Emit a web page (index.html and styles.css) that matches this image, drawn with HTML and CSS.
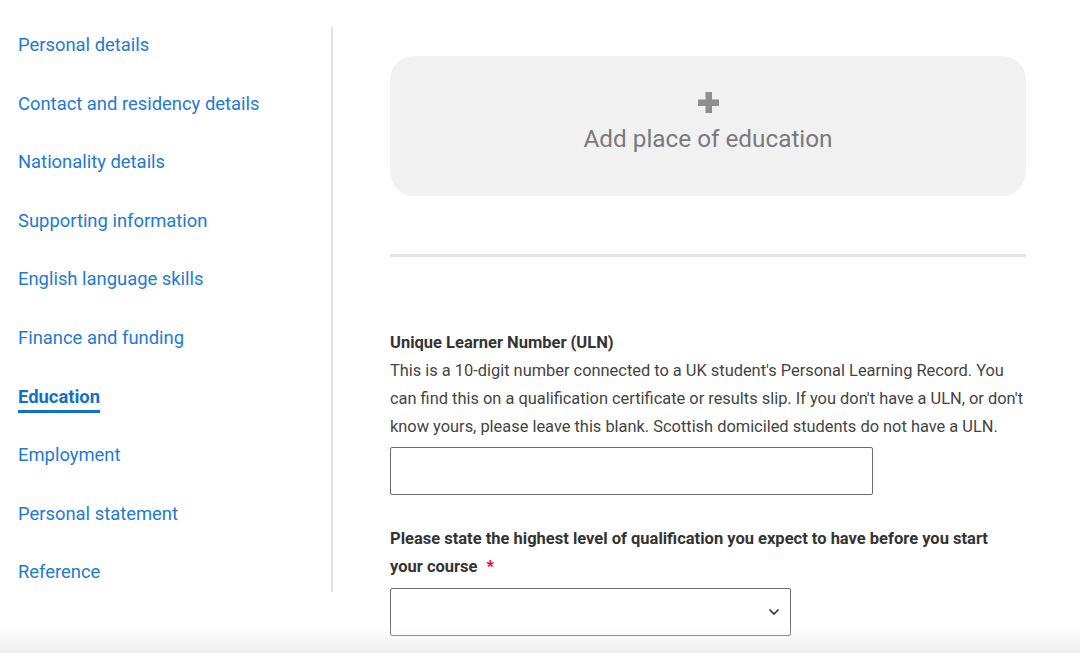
FILE: index.html
```html
<!DOCTYPE html>
<html lang="en">
<head>
<meta charset="utf-8">
<title>Education</title>
<link rel="stylesheet" href="styles.css">
</head>
<body>
<div class="layout">
  <nav class="sidebar">
    <ul class="nav-list">
      <li><a href="#" class="nav-link">Personal details</a></li>
      <li><a href="#" class="nav-link">Contact and residency details</a></li>
      <li><a href="#" class="nav-link">Nationality details</a></li>
      <li><a href="#" class="nav-link">Supporting information</a></li>
      <li><a href="#" class="nav-link">English language skills</a></li>
      <li><a href="#" class="nav-link">Finance and funding</a></li>
      <li><a href="#" class="nav-link active">Education</a></li>
      <li><a href="#" class="nav-link">Employment</a></li>
      <li><a href="#" class="nav-link">Personal statement</a></li>
      <li><a href="#" class="nav-link">Reference</a></li>
    </ul>
  </nav>
  <main class="main">
    <button class="add-card" type="button">
      <svg class="plus" width="21" height="21" viewBox="0 0 21 21" aria-hidden="true">
        <rect x="7.5" y="0" width="6.5" height="21" fill="#8e8e8e"/>
        <rect x="0" y="7.5" width="21" height="6.5" fill="#8e8e8e"/>
      </svg>
      <span class="add-text">Add place of education</span>
    </button>
    <hr class="divider">
    <section class="field uln">
      <label class="label" for="uln">Unique Learner Number (ULN)</label>
      <p class="hint">This is a 10-digit number connected to a UK student's Personal Learning Record. You can find this on a qualification certificate or results slip. If you don't have a ULN, or don't know yours, please leave this blank. Scottish domiciled students do not have a ULN.</p>
      <input id="uln" class="text-input" type="text">
    </section>
    <section class="field qual">
      <label class="label qual-label" for="qual">Please state the highest level of qualification you expect to have before you start your course<span class="req">*</span></label>
      <div class="select-wrap">
        <select id="qual" class="select"><option></option></select>
        <svg class="chev" width="12" height="8" viewBox="0 0 12 8" aria-hidden="true">
          <path d="M1.5 1.5 L6 6 L10.5 1.5" fill="none" stroke="#333" stroke-width="1.6"/>
        </svg>
      </div>
    </section>
  </main>
</div>
<div class="bottom-fade"></div>
</body>
</html>
```
FILE: styles.css
```css
html, body {
  margin: 0;
  padding: 0;
  background: #ffffff;
  font-family: Roboto, "Liberation Sans", Arial, sans-serif;
  height: 653px;
  overflow: hidden;
}

.layout {
  display: flex;
  align-items: flex-start;
}

.sidebar {
  width: 331px;
  margin-top: 27px;
  height: 565px;
  border-right: 2px solid #e3e3e3;
  box-sizing: content-box;
}

.nav-list {
  list-style: none;
  margin: 0;
  padding: 6px 0 0 18px;
  display: flex;
  flex-direction: column;
  gap: 34.6px;
}

.nav-list li {
  height: 24px;
  line-height: 24px;
}

.nav-link {
  font-size: 18.4px;
  color: #1e7ad3;
  text-decoration: none;
  white-space: nowrap;
}

.nav-link.active {
  font-weight: 700;
  color: #1070cc;
  text-decoration: underline;
  text-decoration-thickness: 3px;
  text-underline-offset: 7px;
}

.main {
  margin-left: 57px;
  width: 636px;
  padding-top: 56px;
  display: flex;
  flex-direction: column;
}

.add-card {
  height: 140px;
  border: none;
  border-radius: 24px;
  background: #f1f1f1;
  display: flex;
  flex-direction: column;
  align-items: center;
  padding: 36px 0 0;
  font-family: inherit;
  cursor: pointer;
}

.plus {
  display: block;
  width: 21px;
  height: 21px;
}

.add-text {
  margin-top: 11px;
  font-size: 24.3px;
  line-height: 30px;
  color: #7a7a7a;
  font-weight: 400;
}

.divider {
  margin: 58px 0 0;
  border: none;
  height: 3px;
  background: #e5e5e5;
}

.field {
  display: flex;
  flex-direction: column;
}

.uln {
  margin-top: 72px;
}

.label {
  font-size: 16.5px;
  line-height: 28px;
  font-weight: 700;
  color: #333333;
}

.qual-label {
  max-width: 612px;
}

.hint {
  margin: 0;
  font-size: 16.4px;
  line-height: 28px;
  color: #444444;
}

.text-input {
  margin-top: 6px;
  width: 483px;
  height: 48px;
  box-sizing: border-box;
  border: 1px solid #6b6b6b;
  border-radius: 2px;
  background: #fff;
}

.qual {
  margin-top: 30px;
}

.req {
  display: inline-block;
  color: #e4002b;
  margin-left: 9px;
}

.select-wrap {
  position: relative;
  margin-top: 7px;
  width: 401px;
  height: 48px;
}

.select {
  width: 100%;
  height: 100%;
  box-sizing: border-box;
  border: 1px solid #6b6b6b;
  border-radius: 2px;
  background: #fff;
  appearance: none;
  -webkit-appearance: none;
}

.chev {
  position: absolute;
  right: 11px;
  top: 20px;
}

.bottom-fade {
  position: fixed;
  left: 0;
  right: 0;
  bottom: 0;
  height: 26px;
  background: linear-gradient(to bottom, rgba(240,240,240,0), rgba(236,236,236,0.9));
  pointer-events: none;
}
```
